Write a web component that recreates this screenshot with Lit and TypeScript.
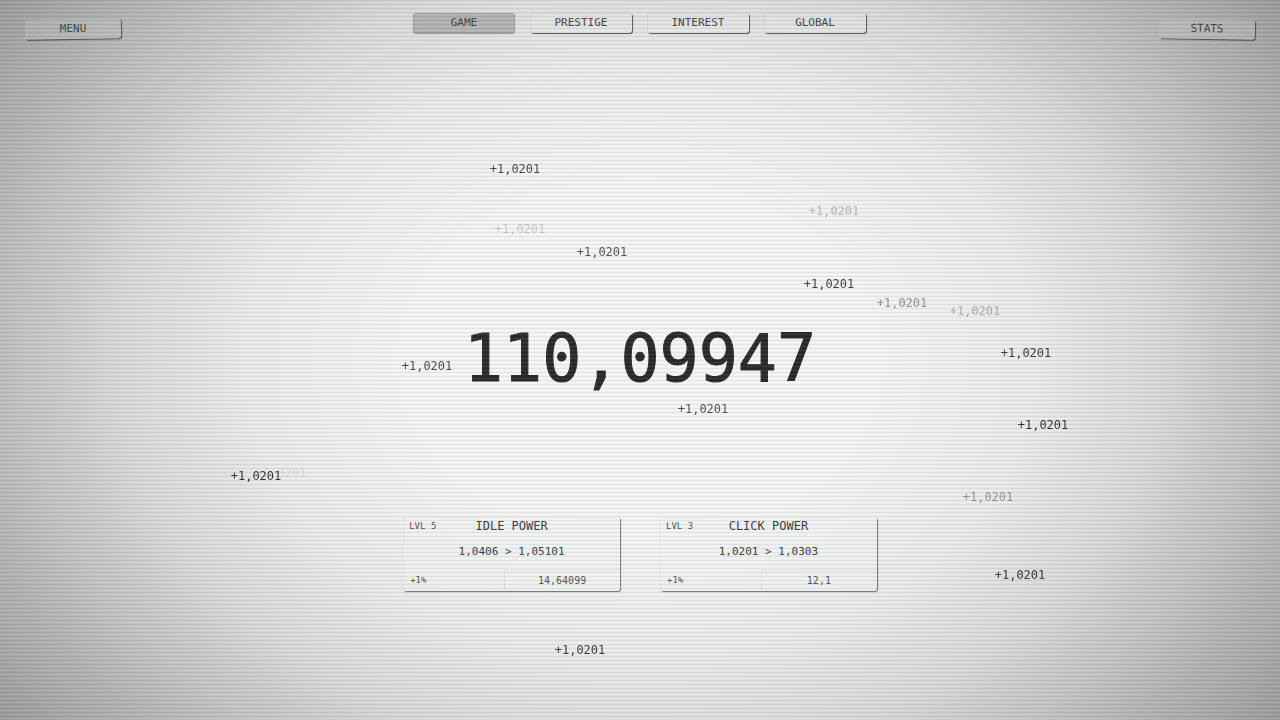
import { LitElement, html, css } from "lit";
import { customElement, property, state } from "lit/decorators.js";

interface Gain {
  x: number;
  y: number;
  fade: number;
}

@customElement("upgrade-card")
class UpgradeCard extends LitElement {
  @property({ type: Number }) level = 1;
  @property() name = "";
  @property() from = "";
  @property() to = "";
  @property() bonus = "";
  @property() cost = "";

  static styles = css`
    :host {
      display: block;
      flex: 1;
    }
    .card {
      box-sizing: border-box;
      display: flex;
      flex-direction: column;
      height: 74px;
      border-radius: 3px;
      background: rgba(240, 246, 244, 0.45);
      border: 1px solid rgba(215, 221, 219, 0.4);
      border-right-color: transparent;
      border-bottom-color: transparent;
      box-shadow: 1px 1px 1px rgba(70, 76, 74, 0.75);
      color: #3c3e3d;
    }
    .head {
      display: grid;
      grid-template-columns: 1fr auto 1fr;
      align-items: center;
      padding: 0 5px;
      height: 18px;
    }
    .level,
    .bonus {
      font-size: 9px;
      color: #555756;
    }
    h2 {
      margin: 0;
      font-size: 12px;
      font-weight: 400;
    }
    .change {
      flex: 1;
      margin: 0;
      font-size: 11px;
      line-height: 36px;
      text-align: center;
      white-space: pre;
    }
    .foot {
      display: grid;
      grid-template-columns: 100px 1fr;
      align-items: center;
      height: 20px;
    }
    .bonus {
      padding-left: 6px;
    }
    .buy {
      height: 20px;
      padding: 0;
      border: 1px solid rgba(205, 211, 209, 0.5);
      border-right: 0;
      border-bottom: 0;
      background: transparent;
      color: #555756;
      font: inherit;
      font-size: 10px;
      cursor: pointer;
    }
  `;

  render() {
    return html`
      <article class="card">
        <div class="head">
          <span class="level">LVL ${this.level}</span>
          <h2>${this.name}</h2>
          <span></span>
        </div>
        <p class="change">${this.from} > ${this.to}</p>
        <div class="foot">
          <span class="bonus">${this.bonus}</span>
          <button class="buy">${this.cost}</button>
        </div>
      </article>
    `;
  }
}

@customElement("app-root")
class AppRoot extends LitElement {
  @state() private tab = "GAME";

  private tabs = ["GAME", "PRESTIGE", "INTEREST", "GLOBAL"];

  private gains: Gain[] = [
    { x: 515, y: 169, fade: 0.85 },
    { x: 834, y: 211, fade: 0.3 },
    { x: 520, y: 229, fade: 0.2 },
    { x: 602, y: 252, fade: 0.8 },
    { x: 829, y: 284, fade: 0.9 },
    { x: 902, y: 303, fade: 0.5 },
    { x: 975, y: 311, fade: 0.35 },
    { x: 1026, y: 353, fade: 0.9 },
    { x: 427, y: 366, fade: 0.85 },
    { x: 703, y: 409, fade: 0.8 },
    { x: 1043, y: 425, fade: 0.95 },
    { x: 281, y: 473, fade: 0.08 },
    { x: 256, y: 476, fade: 0.95 },
    { x: 988, y: 497, fade: 0.45 },
    { x: 1020, y: 575, fade: 0.95 },
    { x: 580, y: 650, fade: 0.9 },
  ];

  static styles = css`
    :host {
      display: block;
      font-family: "DejaVu Sans Mono", monospace;
      color: #2b2b2b;
    }
    .screen {
      box-sizing: border-box;
      position: relative;
      display: grid;
      grid-template-rows: 44px 1fr auto;
      height: 100vh;
      padding-bottom: 129px;
      overflow: hidden;
      background: radial-gradient(
        ellipse 75% 100% at 50% 50%,
        #f7f7f7 0%,
        #f5f5f5 25%,
        #ebebeb 42%,
        #d9d9d9 55%,
        #bfbfbf 67%,
        #9c9c9c 84%,
        #8c8c8c 100%
      );
    }
    .screen::after {
      content: "";
      position: absolute;
      inset: 0;
      pointer-events: none;
      background: repeating-linear-gradient(
        to bottom,
        rgba(0, 0, 0, 0.07) 0 1px,
        rgba(0, 0, 0, 0.02) 1px 2px,
        rgba(255, 255, 255, 0.08) 2px 3px,
        rgba(0, 0, 0, 0.02) 3px 4px
      );
    }
    .bar {
      display: grid;
      grid-template-columns: 1fr auto 1fr;
      align-items: start;
      padding: 13px 25px 0;
    }
    .tabs {
      display: flex;
      gap: 15px;
      margin-right: 1px;
    }
    .key {
      box-sizing: border-box;
      width: 102px;
      height: 20px;
      padding: 0;
      border: 1px solid rgba(190, 196, 194, 0.4);
      border-right-color: transparent;
      border-bottom-color: transparent;
      border-radius: 3px;
      background: rgba(230, 237, 235, 0.35);
      box-shadow: 1px 1px 1px rgba(50, 54, 52, 0.8);
      color: #444645;
      font: inherit;
      font-size: 11px;
      line-height: 16px;
      cursor: pointer;
    }
    .key.active {
      border-color: rgba(140, 145, 143, 0.5);
      background: rgba(158, 163, 161, 0.7);
      box-shadow: 0 1px 1px rgba(110, 114, 112, 0.6);
    }
    .side {
      width: 96px;
      margin-top: 6px;
      background: rgba(205, 213, 211, 0.25);
    }
    .menu {
      transform: rotate(-1deg);
    }
    .stats {
      justify-self: end;
      transform: rotate(1deg);
    }
    .stage {
      display: flex;
      align-items: center;
      justify-content: center;
      padding-top: 156px;
    }
    .total {
      font-size: 65px;
      line-height: 76px;
      -webkit-text-stroke: 1px #2b2b2b;
    }
    .upgrades {
      display: flex;
      gap: 40px;
      width: 37%;
      margin: 0 auto;
    }
    .gain {
      position: absolute;
      transform: translate(-50%, -50%);
      will-change: opacity;
      font-size: 12px;
      line-height: 16px;
      pointer-events: none;
    }
  `;

  render() {
    return html`
      <main class="screen">
        <header class="bar">
          <button class="key side menu">MENU</button>
          <nav class="tabs">
            ${this.tabs.map(
              (t) => html`<button
                class="key ${t === this.tab ? "active" : ""}"
                @click=${() => (this.tab = t)}
              >${t}</button>`
            )}
          </nav>
          <button class="key side stats">STATS</button>
        </header>
        <section class="stage"><output class="total">110,09947</output></section>
        <section class="upgrades">
          <upgrade-card level="5" name="IDLE POWER" from="1,0406" to="1,05101" bonus="+1%" cost="14,64099"></upgrade-card>
          <upgrade-card level="3" name="CLICK POWER" from="1,0201" to="1,0303" bonus="+1%" cost="12,1"></upgrade-card>
        </section>
        ${this.gains.map(
          (g) => html`<span
            class="gain"
            style="left:${(g.x / 1280) * 100}%;top:${(g.y / 720) * 100}%;opacity:${g.fade}"
          >+1,0201</span>`
        )}
      </main>
    `;
  }
}
